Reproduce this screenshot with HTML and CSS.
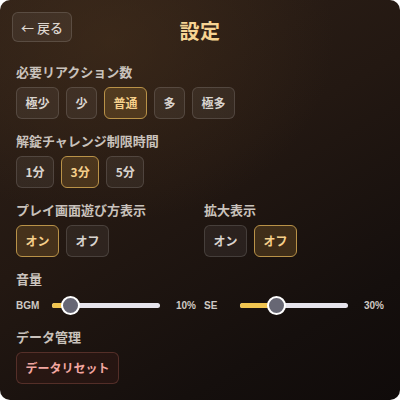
FILE: index.html
```html
<!DOCTYPE html>
<html lang="ja">
<head>
<meta charset="utf-8">
<link rel="stylesheet" href="styles.css">
</head>
<body>
<div class="panel">
  <header class="header">
    <button class="btn back">← 戻る</button>
    <h1 class="title">設定</h1>
    <span></span>
  </header>

  <section class="section">
    <div class="label">必要リアクション数</div>
    <div class="row">
      <button class="btn">極少</button>
      <button class="btn">少</button>
      <button class="btn sel">普通</button>
      <button class="btn">多</button>
      <button class="btn">極多</button>
    </div>
  </section>

  <section class="section">
    <div class="label">解錠チャレンジ制限時間</div>
    <div class="row">
      <button class="btn">1分</button>
      <button class="btn sel">3分</button>
      <button class="btn">5分</button>
    </div>
  </section>

  <div class="cols">
    <section class="section">
      <div class="label">プレイ画面遊び方表示</div>
      <div class="row">
        <button class="btn sel">オン</button>
        <button class="btn">オフ</button>
      </div>
    </section>
    <section class="section">
      <div class="label">拡大表示</div>
      <div class="row">
        <button class="btn">オン</button>
        <button class="btn sel">オフ</button>
      </div>
    </section>
  </div>

  <section class="section">
    <div class="label">音量</div>
    <div class="cols">
      <div class="slider-row">
        <span class="s-label">BGM</span>
        <div class="track"><div class="fill" style="width: calc(9px + 10% * 0.8333)"></div><div class="thumb" style="left: calc(10% * 0.8333)"></div></div>
        <span class="s-val">10%</span>
      </div>
      <div class="slider-row">
        <span class="s-label">SE</span>
        <div class="track"><div class="fill" style="width: calc(9px + 30% * 0.8333)"></div><div class="thumb" style="left: calc(30% * 0.8333)"></div></div>
        <span class="s-val">30%</span>
      </div>
    </div>
  </section>

  <section class="section">
    <div class="label">データ管理</div>
    <div class="row">
      <button class="btn danger">データリセット</button>
    </div>
  </section>
</div>
</body>
</html>
```
FILE: styles.css
```css
* { box-sizing: border-box; }
html, body { margin: 0; padding: 0; background: #ffffff; }
body {
  width: 400px;
  height: 400px;
  font-family: "Noto Sans CJK JP", "Noto Sans", sans-serif;
}
.panel {
  width: 400px;
  height: 400px;
  border-radius: 10px;
  overflow: hidden;
  background:
    radial-gradient(ellipse 320px 260px at 110px 40px, rgba(70, 48, 28, 0.55), rgba(0,0,0,0) 70%),
    linear-gradient(150deg, #2f2118 0%, #231812 45%, #150f0d 80%, #100b0a 100%);
  padding: 12px 16px 0 16px;
  display: flex;
  flex-direction: column;
  gap: 14px;
}
.header {
  display: grid;
  grid-template-columns: 1fr auto 1fr;
  align-items: start;
  margin: 0 -4px 4px -4px;
}
.title {
  margin: 0;
  padding-top: 4px;
  font-size: 20px;
  font-weight: 700;
  color: #f6d493;
  line-height: 30px;
  letter-spacing: 0.5px;
}
.btn {
  font-family: inherit;
  font-size: 12px;
  font-weight: 700;
  height: 32px;
  padding: 0 8.5px;
  border-radius: 6px;
  border: 1px solid rgba(255, 255, 255, 0.13);
  background: rgba(255, 255, 255, 0.06);
  color: #d9d4cf;
  line-height: 1;
  display: inline-flex;
  align-items: center;
  justify-content: center;
}
.btn.back {
  justify-self: start;
  height: 30px;
  padding: 0 8px;
  font-size: 13px;
  font-weight: 500;
  color: #ddd6cf;
}
.btn.sel {
  border-color: #b99248;
  background: rgba(190, 140, 60, 0.22);
  color: #f6d08b;
}
.btn.danger {
  color: #f2a6a0;
  border-color: rgba(200, 110, 100, 0.28);
  background: rgba(90, 35, 30, 0.2);
}
.section {
  display: flex;
  flex-direction: column;
  gap: 7px;
}
.label {
  font-size: 13px;
  font-weight: 700;
  color: #c9c2bc;
  line-height: 16px;
}
.row {
  display: flex;
  gap: 7px;
}
.cols {
  display: grid;
  grid-template-columns: 1fr 1fr;
  gap: 8px;
}
.slider-row {
  display: flex;
  align-items: center;
  height: 20px;
  gap: 8px;
  margin-top: 1px;
}
.s-label, .s-val {
  font-family: "Liberation Sans", "Noto Sans", sans-serif;
  font-size: 10px;
  font-weight: 700;
  color: #cfc9c4;
}
.s-label { width: 28px; }
.s-val { width: 28px; text-align: right; }
.track {
  flex: 1;
  height: 5px;
  border-radius: 3px;
  background: #e6e4ec;
  position: relative;
}
.fill {
  position: absolute;
  left: 0;
  top: 0;
  bottom: 0;
  border-radius: 3px;
  background: #f1c550;
}
.thumb {
  position: absolute;
  top: -7px;
  width: 19px;
  height: 19px;
  border-radius: 50%;
  background: #676774;
  border: 2px solid #ffffff;
}
```
